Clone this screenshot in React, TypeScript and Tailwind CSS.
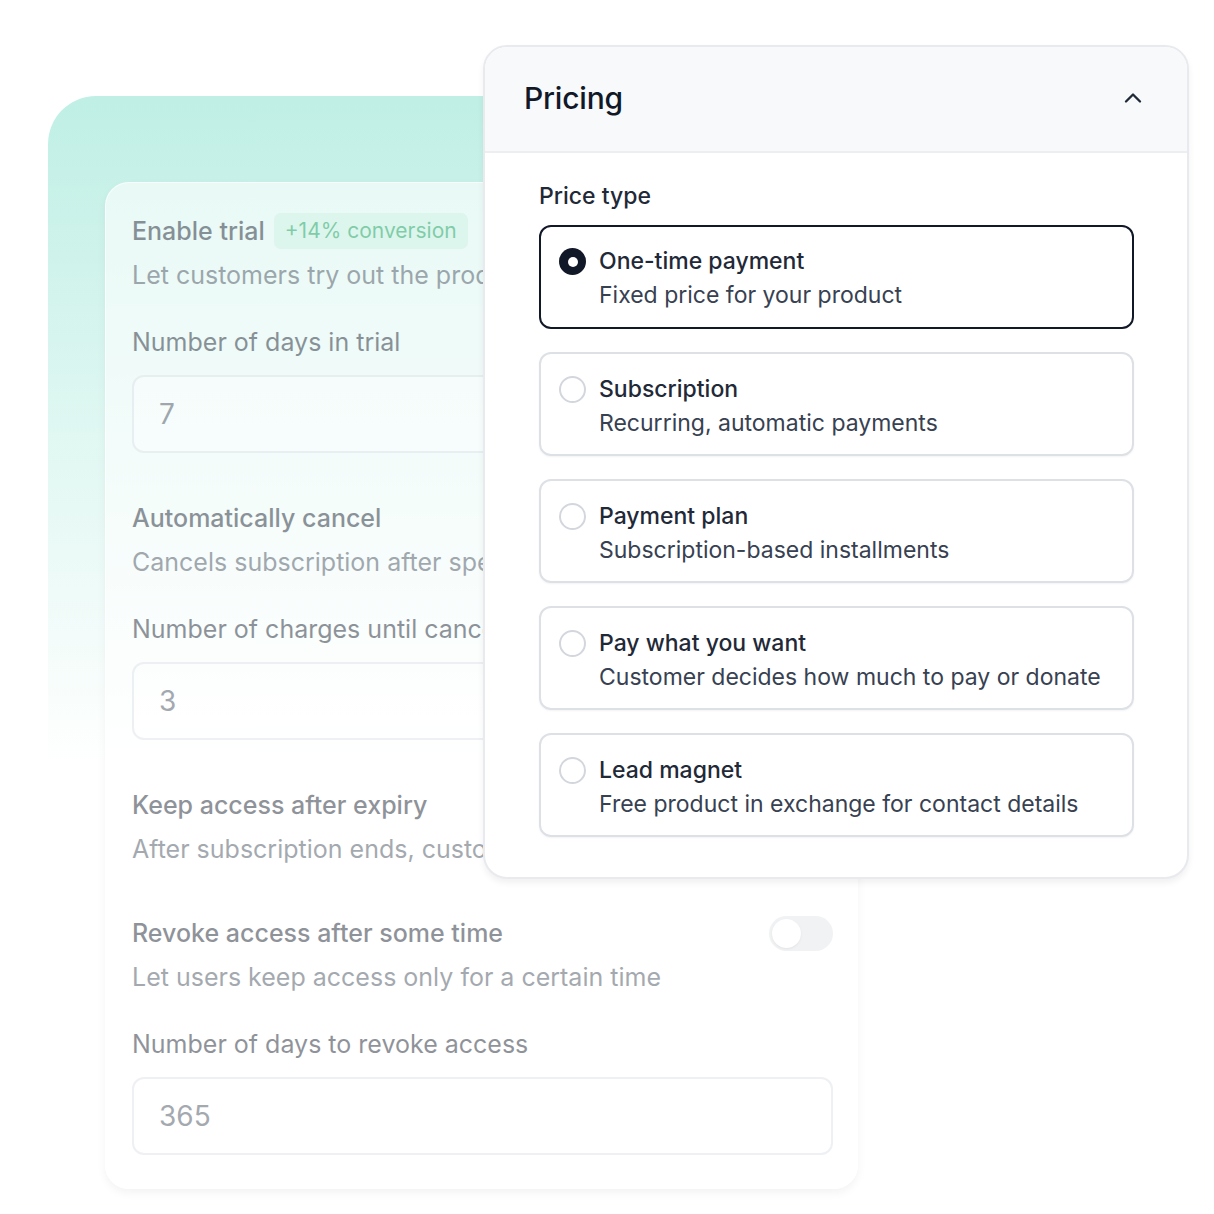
import { ChevronUp } from 'lucide-react';

const PRICE_TYPES = [
  { title: 'One-time payment', subtitle: 'Fixed price for your product' },
  { title: 'Subscription', subtitle: 'Recurring, automatic payments' },
  { title: 'Payment plan', subtitle: 'Subscription-based installments' },
  { title: 'Pay what you want', subtitle: 'Customer decides how much to pay or donate' },
  { title: 'Lead magnet', subtitle: 'Free product in exchange for contact details' },
];

function Toggle() {
  return (
    <div className="mt-[1px] w-[64px] h-[35px] rounded-full bg-[#e5e7eb] p-[3px] flex items-center shrink-0">
      <div className="w-[29px] h-[29px] rounded-full bg-white shadow-sm" />
    </div>
  );
}

function Field({ label, value }: { label: string; value: string }) {
  return (
    <div className="mt-[31px]">
      <div className="text-[25px] leading-[36px] text-[#1f2937]">{label}</div>
      <div className="mt-[15px] h-[78px] rounded-[12px] border-2 border-[#dfe3e8] bg-white/70 px-[25px] flex items-center text-[28px] text-[#4b5563]">
        {value}
      </div>
    </div>
  );
}

function Section({
  title,
  description,
  badge,
  field,
  className = '',
}: {
  title: string;
  description: string;
  badge?: string;
  field?: { label: string; value: string };
  className?: string;
}) {
  return (
    <div className={className}>
      <div className="flex items-start justify-between">
        <div className="min-w-0">
          <div className="flex items-center gap-[9px]">
            <span className="text-[25px] leading-[36px] font-medium text-[#1f2937]">{title}</span>
            {badge && (
              <span className="rounded-[7px] bg-[#b4ecd2]/50 px-[11px] h-[36px] flex items-center text-[21px] text-[#15a05c]">
                {badge}
              </span>
            )}
          </div>
          <div className="mt-[8px] text-[25px] leading-[36px] text-[#4b5563] whitespace-nowrap">
            {description}
          </div>
        </div>
        <Toggle />
      </div>
      {field && <Field label={field.label} value={field.value} />}
    </div>
  );
}

function SettingsCard() {
  return (
    <div className="w-[753px] rounded-[24px] bg-white/60 border border-white/70 shadow-[0_4px_10px_rgba(0,0,0,0.05)] pt-[30px] pb-[33px] pl-[26px] pr-[24px]">
      <div className="opacity-50 flex flex-col gap-[47px]">
        <Section
          title="Enable trial"
          badge="+14% conversion"
          description="Let customers try out the product before paying"
          field={{ label: 'Number of days in trial', value: '7' }}
        />
        <Section
          title="Automatically cancel"
          description="Cancels subscription after specified number of charges"
          field={{ label: 'Number of charges until cancel', value: '3' }}
        />
        <Section
          title="Keep access after expiry"
          description="After subscription ends, customers keep access"
        />
        <Section
          className="mt-[1px]"
          title="Revoke access after some time"
          description="Let users keep access only for a certain time"
          field={{ label: 'Number of days to revoke access', value: '365' }}
        />
      </div>
    </div>
  );
}

function PricingCard() {
  const selected = 0;
  return (
    <div className="absolute left-[483px] top-[45px] w-[706px] rounded-[24px] border-2 border-[#e8eaee] bg-white overflow-hidden shadow-[0_4px_6px_rgba(0,0,0,0.06)]">
      <div className="h-[106px] bg-[#f8f9fb] border-b-2 border-[#eceef1] flex items-center justify-between pl-[39px] pr-[40px]">
        <span className="text-[30px] font-medium text-[#111827] tracking-[-0.2px] -mt-[2px]">Pricing</span>
        <ChevronUp size={28} strokeWidth={2} className="text-[#1f2937] -mt-[2px]" />
      </div>
      <div className="pt-[25px] pb-[40px] pl-[54px] pr-[53px]">
        <div className="text-[23px] leading-[36px] font-medium text-[#1f2937]">Price type</div>
        <div className="mt-[11px] flex flex-col gap-[23px]">
          {PRICE_TYPES.map((p, i) => (
            <div
              key={p.title}
              className={`h-[104px] rounded-[12px] flex items-start gap-[13px] pl-[18px] ${
                i === selected
                  ? 'border-[2.5px] border-[#111827] pt-[17px]'
                  : 'border-2 border-[#dde0e5] shadow-[0_1px_2px_rgba(0,0,0,0.05)] pt-[17.5px]'
              }`}
            >
              {i === selected ? (
                <div className="mt-[4px] w-[27px] h-[27px] rounded-full bg-[#111827] flex items-center justify-center shrink-0">
                  <div className="w-[10px] h-[10px] rounded-full bg-white" />
                </div>
              ) : (
                <div className="mt-[4px] w-[27px] h-[27px] rounded-full border-2 border-[#d3d7dd] bg-white shrink-0" />
              )}
              <div>
                <div className="text-[23px] leading-[34px] font-medium text-[#1f2937]">{p.title}</div>
                <div className="text-[23px] leading-[34px] text-[#374151]">{p.subtitle}</div>
              </div>
            </div>
          ))}
        </div>
      </div>
    </div>
  );
}

export default function App() {
  return (
    <div
      className="relative w-[1214px] h-[1214px] bg-white overflow-hidden"
      style={{ fontFamily: 'Inter, "Noto Sans", sans-serif' }}
    >
      <div className="pt-[96px] pl-[48px]">
        <div className="w-[1060px] h-[1118px] rounded-tl-[48px] rounded-tr-[48px] bg-linear-to-b from-[#bfefe5] to-white to-[60%] pt-[86px] pl-[57px]">
          <SettingsCard />
        </div>
      </div>
      <PricingCard />
    </div>
  );
}
